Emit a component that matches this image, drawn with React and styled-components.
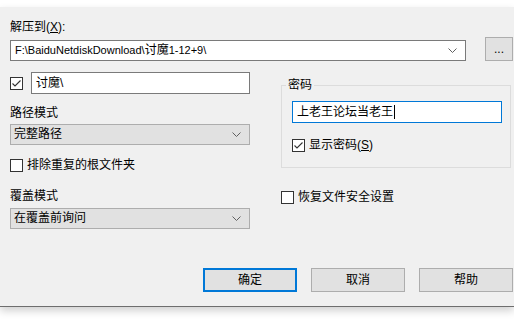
import React from "react";
import styled, { createGlobalStyle } from "styled-components";

const Global = createGlobalStyle`
	body {
		margin: 0;
		background: #ffffff;
		font-family: "Liberation Sans", "Noto Sans CJK SC", sans-serif;
		font-size: 12px;
		color: #000000;
	}
`;

const Page = styled.div`
	padding-top: 7px;
	width: 514px;
	height: 322px;
	box-sizing: border-box;
	overflow: hidden;
`;

const Dialog = styled.div`
	background: #f0f0f0;
	height: 300px;
	box-sizing: border-box;
	border-bottom: 1px solid #6e6e6e;
	box-shadow: 0 4px 8px rgba(0, 0, 0, 0.18);
	padding: 12px 1px 14px 10px;
	display: flex;
	flex-direction: column;
`;

const Label = styled.div`
	height: 16px;
	line-height: 16px;
	margin-top: ${(p) => p.top || 0}px;
	white-space: nowrap;
`;

const Latin = styled.span`
	font-size: 11px;
`;

const PathRow = styled.div`
	display: flex;
	align-items: flex-start;
	margin-top: 2px;
`;

const Combo = styled.div`
	flex: ${(p) => (p.grow ? 1 : "none")};
	width: ${(p) => (p.grow ? "auto" : "240px")};
	height: 21px;
	box-sizing: border-box;
	margin-top: ${(p) => p.top || 0}px;
	margin-right: ${(p) => (p.grow ? 19 : 0)}px;
	background: ${(p) => (p.editable ? "#ffffff" : "#e1e1e1")};
	border: 1px solid ${(p) => (p.editable ? "#7a7a7a" : "#adadad")};
	display: flex;
	align-items: center;
	padding: 0 8px 0 ${(p) => (p.editable ? 4 : 3)}px;
	white-space: nowrap;
`;

const ComboText = styled.span`
	flex: 1;
	line-height: 19px;
`;

const Chevron = () => (
	<svg width="9" height="5" viewBox="0 0 9 5">
		<polyline points="0.5,0.5 4.5,4.5 8.5,0.5" fill="none" stroke="#606060" strokeWidth="1" />
	</svg>
);

const Button = styled.div`
	width: ${(p) => p.w || 94}px;
	height: 24px;
	box-sizing: border-box;
	background: #e1e1e1;
	border: ${(p) => (p.primary ? "2px solid #0078d7" : "1px solid #adadad")};
	display: flex;
	align-items: center;
	justify-content: center;
	line-height: 16px;
	color: #000000;
`;

const Columns = styled.div`
	display: grid;
	grid-template-columns: 240px 230px;
	column-gap: 31px;
	margin-top: 11px;
`;

const Column = styled.div`
	display: flex;
	flex-direction: column;
`;

const NameRow = styled.div`
	display: flex;
	align-items: center;
	gap: 8px;
	height: 22px;
`;

const TextBox = styled.div`
	flex: 1;
	height: 22px;
	box-sizing: border-box;
	background: #ffffff;
	border: 1px solid ${(p) => (p.focused ? "#0078d7" : "#7a7a7a")};
	padding: 0 4px;
	display: flex;
	align-items: center;
	line-height: 20px;
	white-space: nowrap;
`;

const Caret = styled.span`
	display: inline-block;
	width: 1px;
	height: 14px;
	background: #000000;
	margin-left: 1px;
`;

const Check = styled.label`
	display: flex;
	align-items: center;
	gap: 4px;
	height: 16px;
	line-height: 16px;
	margin-top: ${(p) => p.top || 0}px;
	white-space: nowrap;
`;

const Box = styled.span`
	width: 13px;
	height: 13px;
	box-sizing: border-box;
	border: 1px solid #333333;
	background: #ffffff;
	display: flex;
	align-items: center;
	justify-content: center;
	flex: none;
`;

const CheckBox = ({ checked }) => (
	<Box>
		{checked && (
			<svg width="11" height="11" viewBox="0 0 11 11">
				<polyline points="1.5,5.5 4,8 9.5,2.5" fill="none" stroke="#333333" strokeWidth="1.1" />
			</svg>
		)}
	</Box>
);

const Group = styled.fieldset`
	margin: 6px 0 0 0;
	padding: 9px 8px 14px 10px;
	border: 1px solid #dcdcdc;
	min-width: 0;
`;

const Legend = styled.legend`
	padding: 0 2px;
	margin-left: -6px;
	line-height: 14px;
`;

const Footer = styled.div`
	margin-top: auto;
	display: flex;
	justify-content: flex-end;
	gap: 14px;
`;

export default function App() {
	return (
		<Page>
			<Global />
			<Dialog>
				<Label>
					解压到(<u>X</u>):
				</Label>
				<PathRow>
					<Combo grow editable top={3}>
						<ComboText>
							<Latin>F:\BaiduNetdiskDownload\</Latin>讨魔<Latin>1-12+9\</Latin>
						</ComboText>
						<Chevron />
					</Combo>
					<Button w={28}>...</Button>
				</PathRow>

				<Columns>
					<Column>
						<NameRow>
							<CheckBox checked />
							<TextBox>讨魔\</TextBox>
						</NameRow>
						<Label top={11}>路径模式</Label>
						<Combo top={3}>
							<ComboText>完整路径</ComboText>
							<Chevron />
						</Combo>
						<Check top={12}>
							<CheckBox />
							<span>排除重复的根文件夹</span>
						</Check>
						<Label top={15}>覆盖模式</Label>
						<Combo top={4}>
							<ComboText>在覆盖前询问</ComboText>
							<Chevron />
						</Combo>
					</Column>

					<Column>
						<Group>
							<Legend>密码</Legend>
							<TextBox focused>
								上老王论坛当老王
								<Caret />
							</TextBox>
							<Check top={14}>
								<CheckBox checked />
								<span>
									显示密码(<u>S</u>)
								</span>
							</Check>
						</Group>
						<Check top={21}>
							<CheckBox />
							<span>恢复文件安全设置</span>
						</Check>
					</Column>
				</Columns>

				<Footer>
					<Button primary>确定</Button>
					<Button>取消</Button>
					<Button>帮助</Button>
				</Footer>
			</Dialog>
		</Page>
	);
}
